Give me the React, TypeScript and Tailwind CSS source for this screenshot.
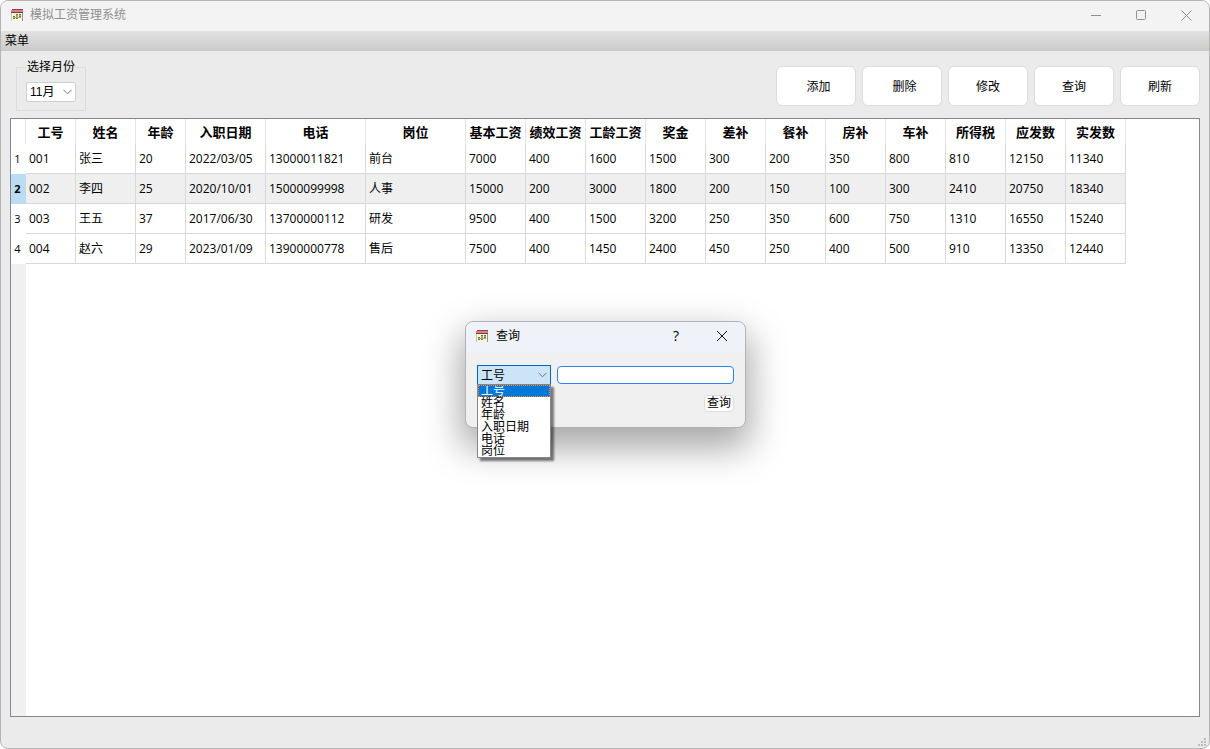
import React, {useState} from "react";

const columns = [
    { label: '工号', width: 'w-[50px]' },
    { label: '姓名', width: 'w-[60px]' },
    { label: '年龄', width: 'w-[50px]' },
    { label: '入职日期', width: 'w-[80px]' },
    { label: '电话', width: 'w-[100px]' },
    { label: '岗位', width: 'w-[100px]' },
    { label: '基本工资', width: 'w-[60px]' },
    { label: '绩效工资', width: 'w-[60px]' },
    { label: '工龄工资', width: 'w-[60px]' },
    { label: '奖金', width: 'w-[60px]' },
    { label: '差补', width: 'w-[60px]' },
    { label: '餐补', width: 'w-[60px]' },
    { label: '房补', width: 'w-[60px]' },
    { label: '车补', width: 'w-[60px]' },
    { label: '所得税', width: 'w-[60px]' },
    { label: '应发数', width: 'w-[60px]' },
    { label: '实发数', width: 'w-[60px]' },
];

const rows = [
    ['001', '张三', '20', '2022/03/05', '13000011821', '前台', '7000', '400', '1600', '1500', '300', '200', '350', '800', '810', '12150', '11340'],
    ['002', '李四', '25', '2020/10/01', '15000099998', '人事', '15000', '200', '3000', '1800', '200', '150', '100', '300', '2410', '20750', '18340'],
    ['003', '王五', '37', '2017/06/30', '13700000112', '研发', '9500', '400', '1500', '3200', '250', '350', '600', '750', '1310', '16550', '15240'],
    ['004', '赵六', '29', '2023/01/09', '13900000778', '售后', '7500', '400', '1450', '2400', '450', '250', '400', '500', '910', '13350', '12440'],
];

const searchFields = ['工号', '姓名', '年龄', '入职日期', '电话', '岗位'];

function AppIcon(){
    return (
        <svg width="12" height="12" viewBox="0 0 12 12" shapeRendering="crispEdges" aria-hidden={true}>
            <rect x="0" y="0" width="12" height="12" fill="#fbf6d3" />
            <rect x="1" y="0" width="11" height="1" fill="#7d4a50" />
            <rect x="0" y="1" width="12" height="2" fill="#f4718a" />
            <rect x="0" y="3" width="12" height="1" fill="#5a4a48" />
            <rect x="0" y="4" width="1" height="8" fill="#c9c6b4" />
            <rect x="11" y="4" width="1" height="8" fill="#96938a" />
            <path d="M5 5h2v1h-2z M8 5h2v1h-2z M2 7h2v1h-2z M8 7h2v1h-2z" fill="#6f6c50" />
            <path d="M5 6h2v2h-2z M8 6h2v1h-2z M2 8h8v1h-8z" fill="#a9a57d" />
            <path d="M2 9h2v1h-2z M5 9h2v1h-2z" fill="#77745a" />
        </svg>
    )
}

function Chevron(){
    return (
        <svg className="pointer-events-none absolute right-1 top-1/2 -translate-y-1/2" width="9" height="6" viewBox="0 0 9 6" fill="none" stroke="#707070" aria-hidden={true}>
            <path d="M0.5 0.8 L4.5 4.8 L8.5 0.8" />
        </svg>
    )
}

function ToolButton({ label, className }: { label: string, className?: string }){
    return (
        <button type="button" className={`h-10 w-20 rounded-md border border-[#dcdcdc] bg-white pt-px text-center ${className ?? ''}`}>{label}</button>
    )
}

function SalaryTable(){
    const [selected, setSelected] = useState<number>(1);

    return (
        <div className="flex flex-1 overflow-hidden border border-[#828790] bg-[linear-gradient(to_right,#f0f0f0_15px,#fff_15px)]">
            <div className="flex-1">
                <table className="table-fixed border-separate border-spacing-0 w-[1115px] bg-white">
                    <thead>
                        <tr className="h-[25px]">
                            <td className="w-[15px] border-r border-[#e5e5e5]"></td>
                            {columns.map((column) => (
                                <th key={column.label} scope="col" className={`${column.width} border-r border-[#e5e5e5] px-0 pt-[2px] pb-0 text-center text-[13px] leading-4 font-bold whitespace-nowrap`}>{column.label}</th>
                            ))}
                        </tr>
                    </thead>
                    <tbody className="font-['Open_Sans','Noto_Sans_CJK_SC',sans-serif]">
                        {rows.map((row, index) => (
                            <tr key={row[0]} onClick={() => setSelected(index)} className={index === selected ? 'h-[30px] bg-[#efefef]' : 'h-[30px]'}>
                                <th scope="row" className={index === selected ? 'bg-[#bcdcf4] py-0 pl-0 pr-[2px] text-center text-[11px] leading-4 font-bold' : 'py-0 pl-0 pr-[2px] text-center text-[11px] leading-4 font-normal'}>{index + 1}</th>
                                {row.map((value, i) => (
                                    <td key={i} className="border-r border-b border-[#d8d8d8] px-[3px] py-0 leading-4 whitespace-nowrap">{value}</td>
                                ))}
                            </tr>
                        ))}
                    </tbody>
                </table>
            </div>
        </div>
    )
}

function SearchDialog(){
    const [field, setField] = useState<string>('工号');
    const [keyword, setKeyword] = useState<string>('');

    return (
        <div role="dialog" aria-label="查询" className="absolute left-[464px] top-[320px] w-[281px] rounded-lg border border-[#b0b2b6] bg-[#f0f0f0] shadow-[0_16px_36px_4px_rgba(0,0,0,0.35)]">
            <div className="flex h-[30px] items-center rounded-t-lg bg-[#eff2f9] pl-[10px] pr-[17px] pb-[2px]">
                <AppIcon />
                <h2 className="ml-2 flex-1">查询</h2>
                <button type="button" aria-label="帮助" className="mr-[34px] w-3 font-['Open_Sans',sans-serif] text-sm leading-4">?</button>
                <button type="button" aria-label="关闭">
                    <svg width="12" height="12" viewBox="0 0 12 12" stroke="#111" aria-hidden={true}>
                        <path d="M1 1 L11 11 M11 1 L1 11" />
                    </svg>
                </button>
            </div>
            <div className="px-[11px] pt-[13px] pb-[15px]">
                <div className="flex items-center gap-[6px]">
                    <div className="relative">
                        <select aria-label="查询字段" value={field} onChange={(e) => setField(e.target.value)} className="block h-5 w-[74px] appearance-none border border-[#0067c0] bg-[#cce4f7] px-[3px] pt-[2px]">
                            {searchFields.map((name) => <option key={name}>{name}</option>)}
                        </select>
                        <Chevron />
                        <ul role="listbox" aria-label="查询字段" className="absolute left-0 top-[19px] z-10 w-[74px] border border-[#82868e] bg-white shadow-[3px_3px_2px_rgba(0,0,0,0.5)]">
                            {searchFields.map((name) => (
                                <li key={name} role="option" aria-selected={name === field} onClick={() => setField(name)} className={name === field ? 'h-3 overflow-hidden border border-dotted border-[#ff8728] bg-[#0078d7] px-[2px] leading-[11px] text-white' : 'h-3 px-[3px] leading-[13px]'}>{name}</li>
                            ))}
                        </ul>
                    </div>
                    <input type="text" aria-label="关键字" value={keyword} onChange={(e) => setKeyword(e.target.value)} className="h-[18px] min-w-0 flex-1 rounded-sm border border-[#2a85f0] bg-white px-1 focus:outline-none" />
                </div>
                <div className="mt-[10px] flex justify-end">
                    <button type="button" className="h-[17px] rounded-sm border border-[#dcdcdc] bg-white px-[2px] leading-[15px]">查询</button>
                </div>
            </div>
        </div>
    )
}

export default function App(){
    const [month, setMonth] = useState<string>('11月');

    return (
        <div className="relative flex min-h-screen flex-col overflow-hidden rounded-lg border border-[#b4b4b4] bg-[#ebebeb] font-['Liberation_Sans','Noto_Sans_CJK_SC',sans-serif] text-xs text-black">
            <header className="flex h-[30px] items-center bg-[#f3f3f3] pl-[10px] pr-[17px] pb-[2px]">
                <AppIcon />
                <h1 className="ml-[7px] flex-1 text-[#8f8f8f]">模拟工资管理系统</h1>
                <div className="flex items-center gap-[34px]">
                    <button type="button" aria-label="最小化">
                        <svg width="11" height="11" viewBox="0 0 11 11" stroke="#8f8f8f" aria-hidden={true}><path d="M0 5.5 H10" /></svg>
                    </button>
                    <button type="button" aria-label="最大化">
                        <svg width="11" height="11" viewBox="0 0 11 11" fill="none" stroke="#8f8f8f" aria-hidden={true}><rect x="0.5" y="0.5" width="9" height="9" rx="1" /></svg>
                    </button>
                    <button type="button" aria-label="关闭">
                        <svg width="11" height="11" viewBox="0 0 11 11" stroke="#8f8f8f" aria-hidden={true}><path d="M0.5 0.5 L10.5 10.5 M10.5 0.5 L0.5 10.5" /></svg>
                    </button>
                </div>
            </header>
            <nav className="flex h-5 items-center bg-linear-to-b from-[#e2e2e2] to-[#cbcbca] px-1">
                <button type="button">菜单</button>
            </nav>
            <main className="flex flex-1 flex-col px-[9px] pb-[31px]">
                <div className="flex h-[67px] items-start justify-between">
                    <fieldset className="ml-[6px] mt-[8px] w-[70px] border border-[#dcdcdc] px-[9px] pb-[8px]">
                        <legend className="px-[1px] leading-4">选择月份</legend>
                        <div className="relative mt-[7px] w-[50px]">
                            <select aria-label="选择月份" value={month} onChange={(e) => setMonth(e.target.value)} className="block h-5 w-full appearance-none rounded-xs border border-[#d0d0d0] bg-white px-[3px]">
                                <option>10月</option>
                                <option>11月</option>
                                <option>12月</option>
                            </select>
                            <Chevron />
                        </div>
                    </fieldset>
                    <div className="mt-[15px] flex gap-[6px]">
                        <ToolButton label="添加" className="pl-[5px]" />
                        <ToolButton label="删除" className="pl-[5px]" />
                        <ToolButton label="修改" />
                        <ToolButton label="查询" />
                        <ToolButton label="刷新" />
                    </div>
                </div>
                <SalaryTable />
            </main>
            <svg className="absolute bottom-[2px] right-[3px]" width="8" height="8" viewBox="0 0 8 8" fill="#bdbdbd" aria-hidden={true}>
                <path d="M6 0h2v2h-2z M3 3h2v2h-2z M6 3h2v2h-2z M0 6h2v2h-2z M3 6h2v2h-2z M6 6h2v2h-2z" />
            </svg>
            <SearchDialog />
        </div>
    )
}
